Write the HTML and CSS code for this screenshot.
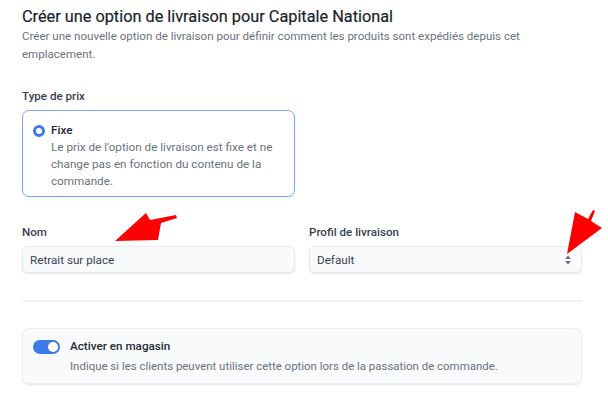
FILE: index.html
```html
<!DOCTYPE html>
<html lang="fr">
<head>
<meta charset="utf-8">
<title>Créer une option de livraison</title>
<link rel="stylesheet" href="styles.css">
</head>
<body>
<div class="page">
  <header class="head">
    <h1 class="title">Créer une option de livraison pour Capitale National</h1>
    <p class="subtitle">Créer une nouvelle option de livraison pour définir comment les produits sont expédiés depuis cet emplacement.</p>
  </header>

  <section class="price">
    <div class="label">Type de prix</div>
    <div class="radio-card">
      <span class="radio"></span>
      <div class="radio-text">
        <div class="radio-title">Fixe</div>
        <div class="radio-desc">Le prix de l'option de livraison est fixe et ne change pas en fonction du contenu de la commande.</div>
      </div>
    </div>
  </section>

  <section class="fields">
    <div class="field">
      <div class="label">Nom</div>
      <div class="input">Retrait sur place</div>
    </div>
    <div class="field">
      <div class="label">Profil de livraison</div>
      <div class="input select">
        <span>Default</span>
        <svg class="chev" width="8" height="12" viewBox="0 0 8 12"><path d="M4 1.5 L7 5 H1 Z M4 10.5 L7 7 H1 Z" fill="#6b7280"/></svg>
      </div>
    </div>
  </section>

  <hr class="divider">

  <section class="toggle-card">
    <span class="toggle"><span class="knob"></span></span>
    <div class="toggle-text">
      <div class="toggle-title">Activer en magasin</div>
      <div class="toggle-desc">Indique si les clients peuvent utiliser cette option lors de la passation de commande.</div>
    </div>
  </section>
</div>

<svg class="arrows" width="608" height="408" viewBox="0 0 608 408">
  <path d="M115 241 L146 213 L150 220 L176 215 L177 218 L161 223 L158 240 Z" fill="#ff0000"/>
  <path d="M567 254 L575 212 L588 219 L593 210 L595 211 L591 221 L602 228 Z" fill="#ff0000"/>
</svg>
</body>
</html>
```

FILE: styles.css
```css
* { box-sizing: border-box; }
html, body { margin: 0; padding: 0; background: #fff; }
body {
  font-family: Roboto, "Liberation Sans", sans-serif;
  color: #1f2937;
  position: relative;
  width: 608px;
  height: 408px;
  overflow: hidden;
}
.page {
  padding: 7px 26px 0 22px;
  display: flex;
  flex-direction: column;
}
.title {
  margin: 0;
  font-size: 16.3px;
  font-weight: 400;
  line-height: 20px;
  color: #1a1f2b;
  -webkit-text-stroke: 0.2px #1a1f2b;
}
.subtitle {
  margin: 0;
  font-size: 11.55px;
  line-height: 18px;
  color: #6b7280;
  width: 530px;
}
.price { margin-top: 25px; }
.label {
  font-size: 11.6px;
  font-weight: 500;
  line-height: 16px;
  color: #374151;
}
.radio-card {
  margin-top: 6px;
  width: 273px;
  height: 87px;
  border: 1px solid #7ea6ee;
  border-radius: 7px;
  padding: 11px 12px 10px 10px;
  display: flex;
  gap: 6px;
  box-shadow: 0 1px 2px rgba(0,0,0,0.06);
}
.radio {
  flex: none;
  width: 12px;
  height: 12px;
  margin-top: 3px;
  border-radius: 50%;
  background: #fff;
  border: 3.5px solid #3b7ae8;
}
.radio-text { flex: 1; }
.radio-title {
  font-size: 11.7px;
  font-weight: 500;
  line-height: 17px;
  color: #1f2937;
}
.radio-desc {
  font-size: 11.7px;
  line-height: 17px;
  color: #6b7280;
}
.fields {
  margin-top: 27px;
  display: grid;
  grid-template-columns: 273px 273px;
  column-gap: 14px;
}
.field { display: flex; flex-direction: column; gap: 6px; }
.input {
  height: 27px;
  background: #f9fafb;
  border: 1px solid #e8e9ec;
  border-radius: 6px;
  box-shadow: 0 1px 2px rgba(0,0,0,0.10);
  padding: 0 7px;
  display: flex;
  align-items: center;
  font-size: 11.7px;
  color: #374151;
}
.select { justify-content: space-between; padding-right: 9px; }
.chev { display: block; }
.divider {
  margin: 27px 0 0;
  border: 0;
  height: 2px;
  background: #f0f1f3;
  width: 560px;
}
.toggle-card {
  margin-top: 26px;
  width: 560px;
  height: 56px;
  background: #f9fafb;
  border: 1px solid #eceef1;
  border-radius: 7px;
  box-shadow: 0 1px 2px rgba(0,0,0,0.10);
  padding: 9px 10px 0 10px;
  display: flex;
  gap: 10px;
}
.toggle {
  flex: none;
  width: 27px;
  height: 14px;
  margin-top: 2px;
  border-radius: 7px;
  background: #3b7ae8;
  position: relative;
}
.knob {
  position: absolute;
  right: 2px;
  top: 2px;
  width: 10px;
  height: 10px;
  border-radius: 50%;
  background: #fff;
}
.toggle-title {
  font-size: 11.7px;
  font-weight: 500;
  line-height: 16px;
  color: #1f2937;
}
.toggle-desc {
  margin-top: 4px;
  font-size: 11.45px;
  line-height: 16px;
  color: #6b7280;
}
.arrows {
  position: absolute;
  left: 0;
  top: 0;
  pointer-events: none;
}
```
